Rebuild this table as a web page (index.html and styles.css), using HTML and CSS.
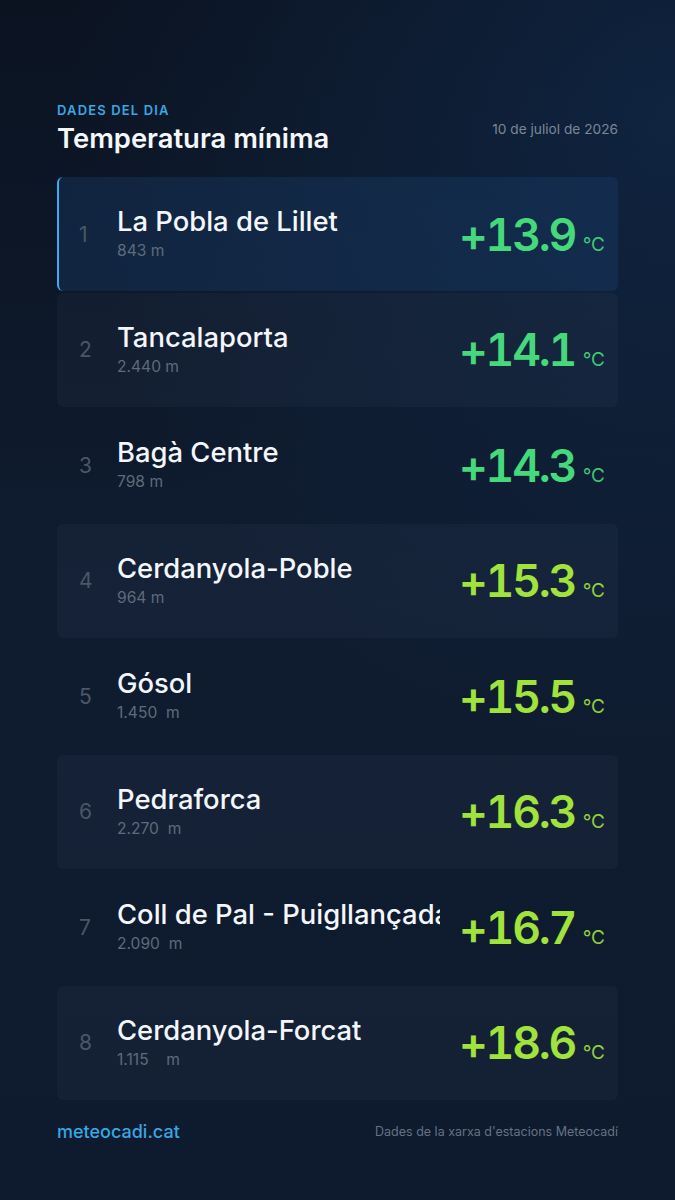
FILE: index.html
```html
<!DOCTYPE html>
<html lang="ca">
<head>
    <meta charset="UTF-8">
    <meta name="viewport" content="width=device-width, initial-scale=1.0">
    <title>Temperatura mínima - Meteocadí</title>
    <link rel="stylesheet" href="styles.css">
</head>
<body>
  <div class="page">

    <div class="header">
      <div>
        <div class="eyebrow">DADES DEL DIA</div>
        <h1>Temperatura mínima</h1>
      </div>
      <div class="date">10 de juliol de 2026</div>
    </div>

    <div class="ranking">
      <div class="row first">
        <div class="rank">1</div>
        <div class="station">
          <div class="name">La Pobla de Lillet</div>
          <div class="alt">843 m</div>
        </div>
        <div class="temp cool"><span class="value">+13.9</span><span class="unit">°C</span></div>
      </div>

      <div class="row shade">
        <div class="rank">2</div>
        <div class="station">
          <div class="name">Tancalaporta</div>
          <div class="alt">2.440 m</div>
        </div>
        <div class="temp cool"><span class="value">+14.1</span><span class="unit">°C</span></div>
      </div>

      <div class="row">
        <div class="rank">3</div>
        <div class="station">
          <div class="name">Bagà Centre</div>
          <div class="alt">798 m</div>
        </div>
        <div class="temp cool"><span class="value">+14.3</span><span class="unit">°C</span></div>
      </div>

      <div class="row shade">
        <div class="rank">4</div>
        <div class="station">
          <div class="name">Cerdanyola-Poble</div>
          <div class="alt">964 m</div>
        </div>
        <div class="temp mild"><span class="value">+15.3</span><span class="unit">°C</span></div>
      </div>

      <div class="row">
        <div class="rank">5</div>
        <div class="station">
          <div class="name">Gósol</div>
          <div class="alt">1.450  m</div>
        </div>
        <div class="temp mild"><span class="value">+15.5</span><span class="unit">°C</span></div>
      </div>

      <div class="row shade">
        <div class="rank">6</div>
        <div class="station">
          <div class="name">Pedraforca</div>
          <div class="alt">2.270  m</div>
        </div>
        <div class="temp mild"><span class="value">+16.3</span><span class="unit">°C</span></div>
      </div>

      <div class="row">
        <div class="rank">7</div>
        <div class="station">
          <div class="name">Coll de Pal - Puigllançada</div>
          <div class="alt">2.090  m</div>
        </div>
        <div class="temp mild"><span class="value">+16.7</span><span class="unit">°C</span></div>
      </div>

      <div class="row shade">
        <div class="rank">8</div>
        <div class="station">
          <div class="name">Cerdanyola-Forcat</div>
          <div class="alt">1.115    m</div>
        </div>
        <div class="temp mild"><span class="value">+18.6</span><span class="unit">°C</span></div>
      </div>
    </div>

    <div class="footer">
      <span class="site">meteocadi.cat</span>
      <span class="source">Dades de la xarxa d'estacions Meteocadí</span>
    </div>

  </div>
</body>
</html>
```

FILE: styles.css
```css
html, body{
    margin: 0;
    height: 100%;
}

body{
    font-family: Inter, "Noto Sans", sans-serif;
    color: #f1f5f9;
    background-color: #0d1829;
    background-image:
        radial-gradient(ellipse 120% 70% at 100% 10%, rgba(16, 38, 68, 0.85), rgba(16, 38, 68, 0) 75%),
        linear-gradient(180deg, #0b1321 0%, #0f1c30 50%, #0e1a2d 100%);
}

.page{
    padding: 102px 57px 0;
}

.header{
    display: flex;
    justify-content: space-between;
    align-items: center;
}

.eyebrow{
    font-size: 13px;
    line-height: 16px;
    font-weight: 600;
    letter-spacing: 1.15px;
    color: #3aa6e2;
}

h1{
    margin: 4px 0 0;
    font-size: 27.4px;
    line-height: 33px;
    font-weight: 600;
    color: #f4f7fb;
}

.date{
    font-size: 13.7px;
    color: #7b8798;
}

.ranking{
    margin-top: 22px;
    display: flex;
    flex-direction: column;
    gap: 1.5px;
}

.row{
    height: 114px;
    box-sizing: border-box;
    display: flex;
    align-items: center;
    padding: 0 13px 0 22px;
    border-radius: 6px;
}

.row.shade{
    background: rgba(120, 140, 175, 0.06);
}

.row.first{
    background: rgba(28, 66, 114, 0.33);
    border-left: 2px solid #38aef0;
    padding-left: 20px;
}

.rank{
    width: 38px;
    flex: none;
    font-size: 21px;
    color: #4b5668;
}

.station{
    flex: 1;
    min-width: 0;
}

.name{
    font-size: 27.4px;
    line-height: 36px;
    margin: -4px 0;
    font-weight: 500;
    white-space: nowrap;
    overflow: hidden;
    color: #f3f6fa;
}

.alt{
    margin-top: 6px;
    font-size: 15.6px;
    line-height: 20px;
    white-space: pre;
    color: #5f6a7c;
}

.temp{
    flex: none;
    width: 146px;
    margin-left: 19px;
    padding-top: 1px;
    display: flex;
    align-items: baseline;
    justify-content: space-between;
}

.value{
    font-size: 44.5px;
    font-weight: 600;
    font-variant-numeric: tabular-nums;
    letter-spacing: -2.2px;
}

.unit{
    font-size: 19px;
    font-weight: 400;
    opacity: 0.9;
}

.cool{
    color: #45d97c;
}

.mild{
    color: #a2e23c;
}

.footer{
    margin-top: 21px;
    display: flex;
    justify-content: space-between;
    align-items: center;
}

.site{
    font-size: 18px;
    font-weight: 500;
    color: #3aa6e2;
}

.source{
    font-size: 12.5px;
    color: #667286;
}
```
